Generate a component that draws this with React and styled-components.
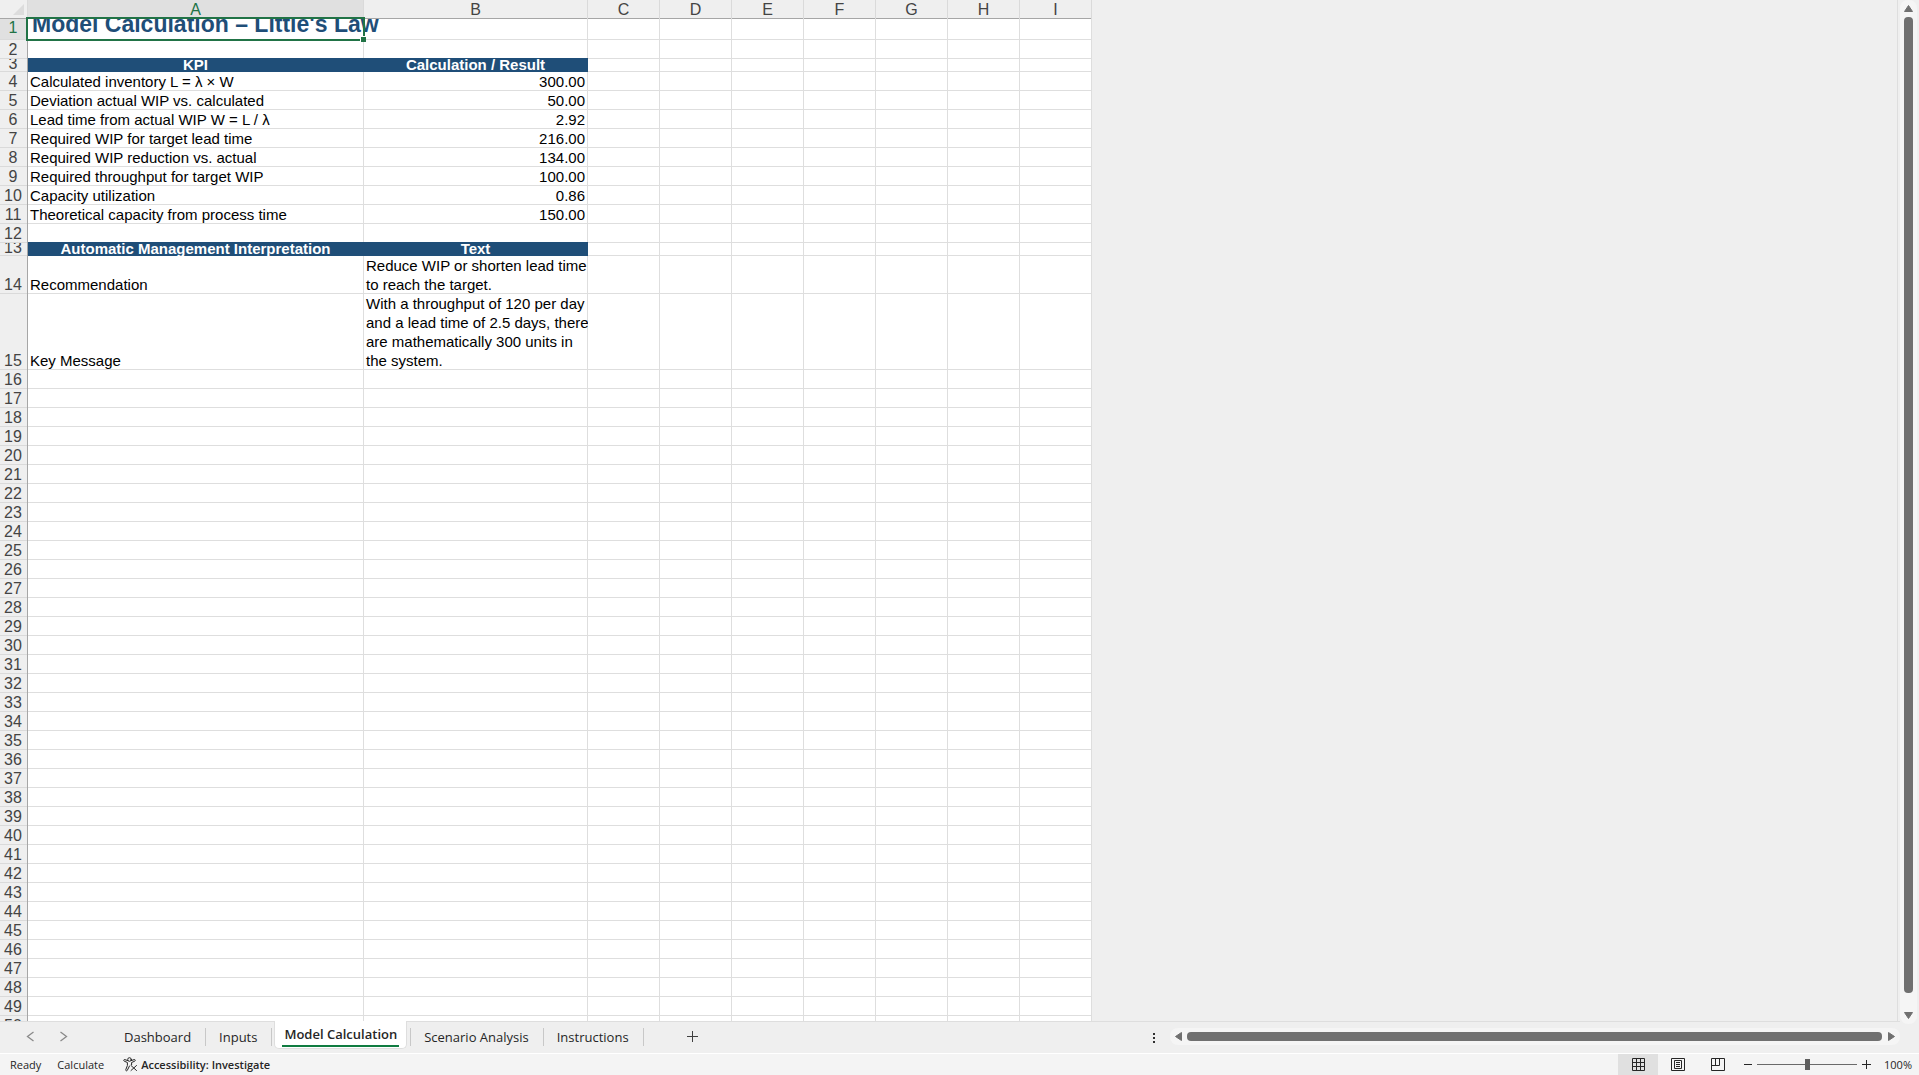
import React, { useState } from "react";
import styled, { createGlobalStyle } from "styled-components";

const GlobalStyle = createGlobalStyle`
    * {
        box-sizing: border-box;
    }
    body {
        margin: 0;
        overflow: hidden;
        background-color: #efefef;
    }
    button {
        padding: 0;
        border: none;
        background: none;
        font: inherit;
        color: inherit;
    }
    svg {
        display: block;
    }
`;

const Window = styled.div`
    display: flex;
    flex-direction: column;
    height: 100vh;
    font-family: "Open Sans", sans-serif;
    color: #262626;
`;

const Workspace = styled.div`
    display: flex;
    flex: 1;
    min-height: 0;
`;

const SheetArea = styled.main`
    flex: 1;
    min-width: 0;
    overflow: hidden;
    border-right: 1px solid #dedede;
`;

const Sheet = styled.table`
    table-layout: fixed;
    width: 0;
    border-collapse: separate;
    border-spacing: 0;
    font-family: "Liberation Sans", Arial, sans-serif;
    font-size: 15px;
    line-height: 19px;
    color: #000000;
`;

const Col = styled.col`
    width: ${(props) => props.$width}px;
`;

const ColumnHead = styled.th`
    height: 19px;
    padding: 0;
    font-size: 16px;
    font-weight: 400;
    color: ${(props) => (props.$active ? "#217346" : "#444444")};
    background-color: ${(props) => (props.$active ? "#e0e0e0" : "#efefef")};
    border-right: 1px solid #dadada;
    box-shadow: inset 0 -1px #a6a6a6;
`;

const Corner = styled(ColumnHead)`
    svg {
        margin-left: 13px;
    }
`;

const RowHead = styled.th`
    padding: 0;
    font-size: 16px;
    font-weight: 400;
    color: ${(props) => (props.$active ? "#217346" : "#444444")};
    background-color: ${(props) => (props.$active ? "#e0e0e0" : "#efefef")};
    border-right: 1px solid #a6a6a6;
    box-shadow: inset 0 -1px #dadada;
`;

const RowNumber = styled.div`
    display: flex;
    flex-direction: column;
    justify-content: flex-end;
    height: ${(props) => props.$height}px;
    padding: 0 1px ${(props) => (props.$raised ? 3 : 0)}px 0;
    overflow: hidden;
    line-height: ${(props) => (props.$height < 19 ? 17 : 19)}px;
`;

const Cell = styled.td`
    position: relative;
    z-index: ${(props) => (props.$selected ? 1 : "auto")};
    padding: 0;
    background-color: ${(props) => (props.$head ? "#1f4e78" : "#ffffff")};
    border-right: 1px solid ${(props) => (props.$head ? "#1f4e78" : "#dedede")};
    box-shadow: ${(props) =>
        props.$head ? "0 -1px #1f4e78" : "inset 0 -1px #dedede"};
`;

const CellText = styled.div`
    display: flex;
    flex-direction: column;
    justify-content: flex-end;
    height: ${(props) => props.$height}px;
    padding: 0 2px;
    overflow-x: visible;
    overflow-y: clip;
    white-space: pre;
    text-align: ${(props) => props.$align};
`;

const HeadText = styled(CellText)`
    font-weight: 700;
    line-height: 15px;
    color: #ffffff;
`;

const Title = styled.div`
    display: flex;
    flex-direction: column;
    justify-content: flex-end;
    height: 21px;
    padding-left: 4px;
    overflow-x: visible;
    overflow-y: clip;
    white-space: nowrap;
    font-size: 23px;
    font-weight: 700;
    line-height: 31px;
    color: #1f4e78;
`;

const Selection = styled.div`
    position: absolute;
    inset: -2px -2px -1px -2px;
    border: 2px solid #217346;
`;

const FillHandle = styled.div`
    position: absolute;
    right: -3px;
    bottom: -3px;
    width: 6px;
    height: 6px;
    background-color: #217346;
    border: 1px solid #ffffff;
    border-width: 1px 0 0 1px;
`;

const VerticalScroll = styled.div`
    display: flex;
    flex-direction: column;
    align-items: center;
    width: 17px;
    margin: 0 2px -3px 2px;
    padding: 5px 0;
    border-radius: 8px;
    background-color: #f5f5f5;
`;

const VerticalThumb = styled.div`
    flex: 1;
    width: 9px;
    margin: 5px 0 19px;
    border-radius: 4px;
    background-color: #707070;
`;

const ArrowButton = styled.button`
    display: flex;
`;

const TabBar = styled.div`
    display: flex;
    align-items: flex-start;
    justify-content: space-between;
    height: 32px;
    border-top: 1px solid #dedede;
    background-color: #efefef;
    margin-right: 19px;
`;

const TabSide = styled.div`
    display: flex;
    align-items: flex-start;
`;

const SheetNav = styled.div`
    display: flex;
    gap: 24px;
    width: 111px;
    padding: 9px 0 0 26px;
    color: #8a8a8a;
`;

const Tab = styled.button`
    height: 18px;
    margin-top: 6px;
    padding: 0 14px 0 13px;
    font-size: 13px;
    line-height: 18px;
    border-right: 1px solid #c8c8c8;
    border-left: ${(props) => (props.$divided ? "1px solid #c8c8c8" : "none")};
`;

const ActiveTab = styled.button`
    height: 28px;
    margin: -1px 3px 0 2px;
    padding: 0 7px;
    font-size: 13px;
    font-weight: 600;
    background-color: #ffffff;
    border: 1px solid #dedede;
    border-top: none;
    border-radius: 0 0 5px 5px;
`;

const ActiveLabel = styled.span`
    display: block;
    padding: 0 2px;
    line-height: 22px;
    border-bottom: 2px solid #107c41;
`;

const AddButton = styled.button`
    margin: 9px 0 0 43px;
`;

const Dots = styled.button`
    margin: 11px 15px 0 0;
`;

const HorizontalScroll = styled.div`
    display: flex;
    align-items: center;
    width: calc(38vw + 1px);
    height: 17px;
    margin-top: 6px;
    padding: 0 5px;
    border-radius: 8px;
    background-color: #f5f5f5;
`;

const HorizontalThumb = styled.div`
    flex: 1;
    height: 9px;
    margin: 0 6px 0 5px;
    border-radius: 4px;
    background-color: #707070;
`;

const StatusBar = styled.footer`
    display: flex;
    justify-content: space-between;
    height: 22px;
    border-top: 1px solid #ffffff;
    background-color: #f4f4f4;
    font-size: 11px;
    line-height: 21px;
`;

const StatusSide = styled.div`
    display: flex;
    align-items: center;
`;

const StatusTexts = styled.div`
    display: flex;
    gap: 16px;
    padding-left: 10px;
`;

const AccessButton = styled.button`
    display: flex;
    align-items: center;
    gap: 3px;
    margin-left: 19px;
    font-weight: 600;
`;

const ViewButton = styled.button`
    display: flex;
    align-items: center;
    justify-content: center;
    width: 40px;
    height: 21px;
    background-color: ${(props) => (props.$active ? "#e0e0e0" : "transparent")};
`;

const ZoomControl = styled.div`
    display: flex;
    align-items: center;
    gap: 5px;
    padding-left: 6px;
`;

const ZoomSlider = styled.input`
    width: 100px;
    height: 12px;
    margin: 0;
    appearance: none;
    background: linear-gradient(#6a6a6a, #6a6a6a) center / 100% 1px no-repeat;
    &::-webkit-slider-thumb {
        appearance: none;
        width: 5px;
        height: 11px;
        background-color: #5f5f5f;
    }
`;

const ZoomLevel = styled.span`
    width: 48px;
    padding-left: 13px;
`;

const columns = [
    { name: "A", width: 336 },
    { name: "B", width: 224 },
    { name: "C", width: 72 },
    { name: "D", width: 72 },
    { name: "E", width: 72 },
    { name: "F", width: 72 },
    { name: "G", width: 72 },
    { name: "H", width: 72 },
    { name: "I", width: 72 },
];

const content = {
    1: { title: "Model Calculation – Little's Law", height: 21 },
    3: { a: "KPI", b: "Calculation / Result", head: true, height: 13 },
    4: { a: "Calculated inventory L = λ × W", b: "300.00" },
    5: { a: "Deviation actual WIP vs. calculated", b: "50.00" },
    6: { a: "Lead time from actual WIP W = L / λ", b: "2.92" },
    7: { a: "Required WIP for target lead time", b: "216.00" },
    8: { a: "Required WIP reduction vs. actual", b: "134.00" },
    9: { a: "Required throughput for target WIP", b: "100.00" },
    10: { a: "Capacity utilization", b: "0.86" },
    11: { a: "Theoretical capacity from process time", b: "150.00" },
    13: {
        a: "Automatic Management Interpretation",
        b: "Text",
        head: true,
        height: 13,
    },
    14: {
        a: "Recommendation",
        b: "Reduce WIP or shorten lead time\nto reach the target.",
        text: true,
        height: 38,
    },
    15: {
        a: "Key Message",
        b: "With a throughput of 120 per day\nand a lead time of 2.5 days, there\nare mathematically 300 units in\nthe system.",
        text: true,
        height: 76,
    },
};

const rows = Array.from({ length: 50 }, (_, i) => ({
    number: i + 1,
    height: 19,
    ...content[i + 1],
}));

function Arrow({ direction }) {
    const shapes = {
        up: [9, 7, "M4.5 0.5 8.5 6.5h-8z"],
        down: [9, 7, "M4.5 6.5 8.5 0.5h-8z"],
        left: [7, 9, "M0.5 4.5 6.5 0.5v8z"],
        right: [7, 9, "M6.5 4.5 0.5 0.5v8z"],
    };
    const [width, height, d] = shapes[direction];
    return (
        <ArrowButton aria-label={`Scroll ${direction}`}>
            <svg width={width} height={height}>
                <path d={d} fill="#707070" stroke="#707070" strokeLinejoin="round" />
            </svg>
        </ArrowButton>
    );
}

function SheetRow({ row }) {
    const { number, height, title, head, text, a, b } = row;
    const Text = head ? HeadText : CellText;
    return (
        <tr>
            <RowHead scope="row" $active={number === 1}>
                <RowNumber $height={height} $raised={number === 1}>
                    {number}
                </RowNumber>
            </RowHead>
            <Cell $head={head} $selected={number === 1}>
                {title ? (
                    <>
                        <Title>{title}</Title>
                        <Selection>
                            <FillHandle />
                        </Selection>
                    </>
                ) : (
                    <Text $height={height} $align={head ? "center" : "left"}>
                        {a}
                    </Text>
                )}
            </Cell>
            <Cell $head={head}>
                <Text
                    $height={height}
                    $align={head ? "center" : text ? "left" : "right"}
                >
                    {b}
                </Text>
            </Cell>
            {columns.slice(2).map((column) => (
                <Cell key={column.name} />
            ))}
        </tr>
    );
}

function Chevron({ direction }) {
    return (
        <button aria-label={`${direction} sheet`}>
            <svg width="9" height="11" fill="none" stroke="currentColor" strokeWidth="1.3">
                <path d={direction === "Previous" ? "M7.5 1 1.5 5.5l6 4.5" : "M1.5 1l6 4.5-6 4.5"} />
            </svg>
        </button>
    );
}

function AccessibilityIcon() {
    return (
        <svg width="15" height="15" fill="none" stroke="#262626" strokeLinecap="round" strokeLinejoin="round">
            <circle cx="6.5" cy="2.5" r="1.8" />
            <path d="M4.8 3.6 1.8 2.6C.6 2.3.3 3.8 1.3 4.2L4.4 5.5v3L2.8 12.6c-.4 1.2 1 1.8 1.5.7L6.5 9" />
            <path d="M8.2 3.6l3-1c1.2-.3 1.5 1.2.5 1.6L8.6 5.5v2.2M8 8.5l5.5 5M13.5 8.5l-5.5 5" />
        </svg>
    );
}

export default function App() {
    const [zoom, setZoom] = useState(100);

    return (
        <Window>
            <GlobalStyle />
            <Workspace>
                <SheetArea>
                    <Sheet>
                        <colgroup>
                            <Col $width={28} />
                            {columns.map((column) => (
                                <Col key={column.name} $width={column.width} />
                            ))}
                        </colgroup>
                        <thead>
                            <tr>
                                <Corner>
                                    <svg width="11" height="11">
                                        <path d="M11 0v11H0z" fill="#dcdcdc" />
                                    </svg>
                                </Corner>
                                {columns.map((column) => (
                                    <ColumnHead
                                        key={column.name}
                                        scope="col"
                                        $active={column.name === "A"}
                                    >
                                        {column.name}
                                    </ColumnHead>
                                ))}
                            </tr>
                        </thead>
                        <tbody>
                            {rows.map((row) => (
                                <SheetRow key={row.number} row={row} />
                            ))}
                        </tbody>
                    </Sheet>
                </SheetArea>
                <VerticalScroll>
                    <Arrow direction="up" />
                    <VerticalThumb />
                    <Arrow direction="down" />
                </VerticalScroll>
            </Workspace>
            <TabBar>
                <TabSide>
                    <SheetNav>
                        <Chevron direction="Previous" />
                        <Chevron direction="Next" />
                    </SheetNav>
                    <Tab>Dashboard</Tab>
                    <Tab>Inputs</Tab>
                    <ActiveTab>
                        <ActiveLabel>Model Calculation</ActiveLabel>
                    </ActiveTab>
                    <Tab $divided>Scenario Analysis</Tab>
                    <Tab>Instructions</Tab>
                    <AddButton aria-label="New sheet">
                        <svg width="11" height="11" stroke="#404040">
                            <path d="M5.5 0v11M0 5.5h11" />
                        </svg>
                    </AddButton>
                </TabSide>
                <TabSide>
                    <Dots aria-label="Resize tabs">
                        <svg width="2" height="10" fill="#303030">
                            <path d="M0 0h2v2H0zM0 4h2v2H0zM0 8h2v2H0z" />
                        </svg>
                    </Dots>
                    <HorizontalScroll>
                        <Arrow direction="left" />
                        <HorizontalThumb />
                        <Arrow direction="right" />
                    </HorizontalScroll>
                </TabSide>
            </TabBar>
            <StatusBar>
                <StatusSide>
                    <StatusTexts>
                        <span>Ready</span>
                        <span>Calculate</span>
                    </StatusTexts>
                    <AccessButton>
                        <AccessibilityIcon />
                        Accessibility: Investigate
                    </AccessButton>
                </StatusSide>
                <StatusSide>
                    <ViewButton $active aria-label="Normal">
                        <svg width="13" height="13" fill="none" stroke="#262626">
                            <path d="M.5.5h12v12H.5zM4.5 0v13M8.5 0v13M0 4.5h13M0 8.5h13" />
                        </svg>
                    </ViewButton>
                    <ViewButton aria-label="Page layout">
                        <svg width="14" height="13" fill="none" stroke="#262626">
                            <path d="M.5.5h13v12H.5zM3.5 2.5h7v8h-7zM5 4.5h4M5 6.5h4M5 8.5h4" />
                        </svg>
                    </ViewButton>
                    <ViewButton aria-label="Page break preview">
                        <svg width="14" height="13" fill="none" stroke="#262626">
                            <path d="M.5.5h13v12H.5zM.5 7.5h8v-7M4.5.5v7" />
                        </svg>
                    </ViewButton>
                    <ZoomControl>
                        <button aria-label="Zoom out">
                            <svg width="8" height="9" stroke="#262626">
                                <path d="M0 4.5h8" />
                            </svg>
                        </button>
                        <ZoomSlider
                            type="range"
                            aria-label="Zoom"
                            min="0"
                            max="200"
                            value={zoom}
                            onChange={(e) => {
                                setZoom(Number(e.target.value));
                            }}
                        />
                        <button aria-label="Zoom in">
                            <svg width="9" height="9" stroke="#262626">
                                <path d="M0 4.5h9M4.5 0v9" />
                            </svg>
                        </button>
                    </ZoomControl>
                    <ZoomLevel>{zoom}%</ZoomLevel>
                </StatusSide>
            </StatusBar>
        </Window>
    );
}
